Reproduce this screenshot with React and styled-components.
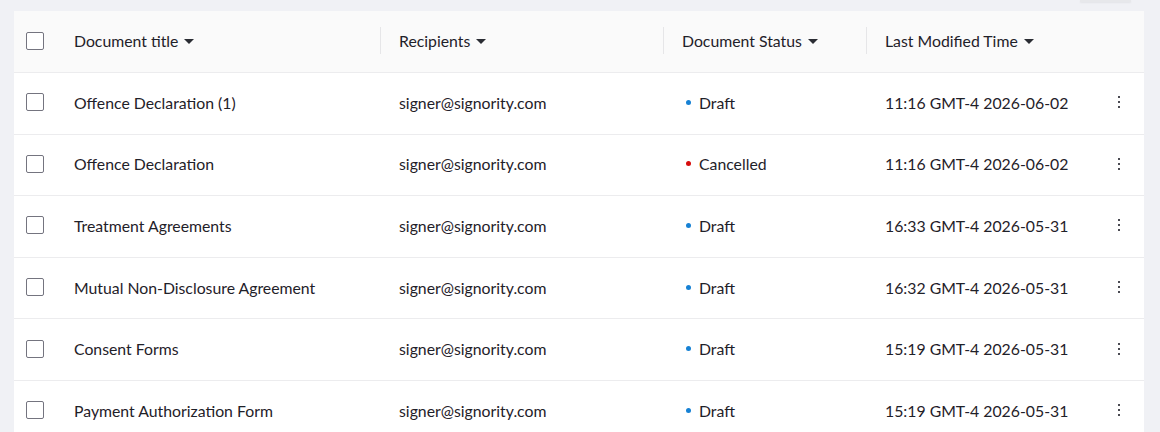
import styled, { createGlobalStyle } from "styled-components";

const GlobalStyle = createGlobalStyle`
  body {
    margin: 0;
    background: #f0f1f5;
    font-family: Lato, "Open Sans", sans-serif;
    color: #1f2129;
  }
`;

const Page = styled.div`
  padding: 0 16px 0 14px;
`;

const Toolbar = styled.div`
  display: flex;
  justify-content: flex-end;
  height: 11px;
  padding-right: 13px;
`;

const ToolButton = styled.div`
  width: 51px;
  height: 2px;
  background: #e7e8eb;
  box-shadow: 0 1px 2px rgba(0, 0, 0, 0.06);
`;

const Card = styled.div`
  background: #fff;
`;

const Row = styled.div`
  display: grid;
  box-sizing: border-box;
  grid-template-columns: 41px 325px 283px 203px 1fr 49px;
  height: ${(p) => (p.$head ? "62px" : "61.6px")};
  padding-bottom: 2px;
  align-items: center;
  border-bottom: 1px solid #ececee;
  background: ${(p) => (p.$head ? "#fafafa" : "#fff")};
  font-size: 15.8px;
`;

const Cell = styled.div`
  display: flex;
  align-items: center;
  padding-left: ${(p) => (p.$check ? "12px" : "19px")};
  white-space: nowrap;
`;

const HeadCell = styled.div`
  display: flex;
  align-items: center;
  height: 27px;
  padding-left: ${(p) => (p.$divider ? "18px" : "19px")};
  border-left: ${(p) => (p.$divider ? "1px solid #e6e6e8" : "none")};
`;

const Caret = styled.span`
  width: 0;
  height: 0;
  margin-left: 6px;
  margin-top: 1px;
  border-left: 5px solid transparent;
  border-right: 5px solid transparent;
  border-top: 5px solid #2a2c33;
`;

const Checkbox = styled.span`
  box-sizing: border-box;
  width: 18px;
  height: 18px;
  border: 1.5px solid #74747f;
  border-radius: 2px;
  background: #fff;
`;

const Status = styled.span`
  display: flex;
  align-items: center;
  gap: 8px;
  padding-left: 4px;
`;

const Dot = styled.span`
  width: 5px;
  height: 5px;
  border-radius: 50%;
  background: ${(p) => (p.$tone === "red" ? "#d60d0d" : "#1681d4")};
`;

const Kebab = styled.div`
  display: flex;
  flex-direction: column;
  align-items: center;
  gap: 3px;
  padding-right: 1px;
`;

const KebabDot = styled.span`
  width: 2px;
  height: 2px;
  background: #4a4a52;
`;

const docs = [
  { title: "Offence Declaration (1)", status: "Draft", time: "11:16 GMT-4 2026-06-02" },
  { title: "Offence Declaration", status: "Cancelled", time: "11:16 GMT-4 2026-06-02" },
  { title: "Treatment Agreements", status: "Draft", time: "16:33 GMT-4 2026-05-31" },
  { title: "Mutual Non-Disclosure Agreement", status: "Draft", time: "16:32 GMT-4 2026-05-31" },
  { title: "Consent Forms", status: "Draft", time: "15:19 GMT-4 2026-05-31" },
  { title: "Payment Authorization Form", status: "Draft", time: "15:19 GMT-4 2026-05-31" },
];

const App = () => {
  return (
    <>
      <GlobalStyle />
      <Page>
        <Toolbar>
          <ToolButton />
        </Toolbar>
        <Card>
          <Row $head>
            <Cell $check>
              <Checkbox />
            </Cell>
            <HeadCell>
              Document title <Caret />
            </HeadCell>
            <HeadCell $divider>
              Recipients <Caret />
            </HeadCell>
            <HeadCell $divider>
              Document Status <Caret />
            </HeadCell>
            <HeadCell $divider>
              Last Modified Time <Caret />
            </HeadCell>
            <div />
          </Row>
          {docs.map((d, i) => (
            <Row key={i}>
              <Cell $check>
                <Checkbox />
              </Cell>
              <Cell>{d.title}</Cell>
              <Cell>signer@signority.com</Cell>
              <Cell>
                <Status>
                  <Dot $tone={d.status === "Cancelled" ? "red" : "blue"} />
                  {d.status}
                </Status>
              </Cell>
              <Cell>{d.time}</Cell>
              <Kebab>
                <KebabDot />
                <KebabDot />
                <KebabDot />
              </Kebab>
            </Row>
          ))}
        </Card>
      </Page>
    </>
  );
};

export default App;
